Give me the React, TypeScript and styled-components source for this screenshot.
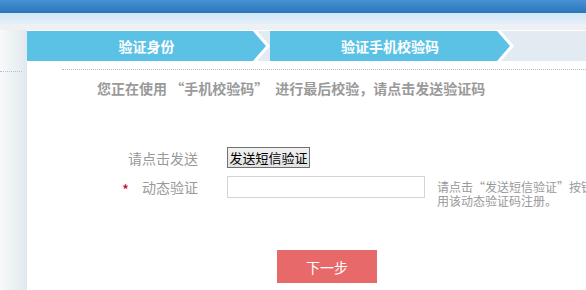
import styled, { createGlobalStyle } from "styled-components";

const GlobalStyle = createGlobalStyle`
	html, body {
		margin: 0;
		padding: 0;
	}
	body {
		width: 586px;
		height: 290px;
		overflow: hidden;
		background: #fff;
		font-family: "Noto Sans CJK SC", "Noto Sans", sans-serif;
	}
`;

const Page = styled.div`
	display: flex;
	flex-direction: column;
	width: 586px;
	height: 290px;
	overflow: hidden;
`;

const TopBar = styled.div`
	height: 13px;
	background: linear-gradient(#4792d4, #2b75ba);
`;

const SubBar = styled.div`
	height: 11px;
	background: linear-gradient(#d2e6f7, #e4f0fa);
`;

const Strip = styled.div`
	height: 6px;
	background: #eef0f2;
`;

const Body = styled.div`
	display: flex;
	flex: 1;
`;

const Side = styled.div`
	width: 27px;
	flex-shrink: 0;
	background: linear-gradient(to right, #f7f9fa, #e2e9ee);
	padding-top: 41px;
	box-sizing: border-box;
`;

const SideRule = styled.div`
	width: 22px;
	border-top: 1px dotted #b8bec4;
`;

const Main = styled.div`
	flex: 1;
	padding-top: 1px;
	min-width: 0;
`;

const Tabs = styled.div`
	display: flex;
	height: 30px;
	background: #e2ebf2;
`;

const arrow = `polygon(0 0, calc(100% - 13px) 0, 100% 50%, calc(100% - 13px) 100%, 0 100%)`;

const Tab = styled.div<{ width: number }>`
	width: ${(props) => props.width}px;
	height: 100%;
	background: #fff;
	clip-path: ${arrow};
`;

const TabInner = styled.div`
	height: 100%;
	margin-right: 4px;
	background: #5bc2e6;
	clip-path: ${arrow};
	display: flex;
	align-items: center;
	justify-content: center;
	color: #fff;
	font-size: 14px;
	font-weight: bold;
`;

const Divider = styled.div`
	margin: 8px 0 0 35px;
	border-top: 1px dotted #bbb;
`;

const Intro = styled.p`
	margin: 8px 0 0 70px;
	line-height: 20px;
	font-size: 14px;
	font-weight: bold;
	color: #9a9a9a;
	white-space: pre;
`;

const Form = styled.div`
	display: grid;
	grid-template-columns: 171px auto;
	column-gap: 29px;
	row-gap: 7px;
	margin-top: 49px;
`;

const Label = styled.div`
	display: flex;
	align-items: center;
	justify-content: flex-end;
	height: 22px;
	font-size: 14px;
	color: #999;
`;

const Star = styled.span`
	color: #c8001e;
	font-size: 15px;
	margin-right: 13px;
	padding-top: 4px;
`;

const SmsButton = styled.button`
	justify-self: start;
	box-sizing: border-box;
	width: 83px;
	height: 21px;
	padding: 0;
	border: 1px solid #707070;
	background: linear-gradient(#f2f2f2, #e2e2e2);
	color: #000;
	font-family: "Noto Sans CJK SC", sans-serif;
	font-size: 13px;
	line-height: 19px;
`;

const Field = styled.div`
	display: flex;
	align-items: flex-start;
	gap: 12px;
	min-width: 0;
	overflow: hidden;
`;

const Input = styled.input`
	box-sizing: border-box;
	width: 198px;
	height: 22px;
	flex-shrink: 0;
	border: 1px solid #d4d4d4;
	outline: none;
`;

const Hint = styled.div`
	margin-top: 4px;
	display: flex;
	flex-direction: column;
`;

const HintLine = styled.span`
	height: 14px;
	font-size: 12px;
	line-height: 14px;
	color: #999;
	white-space: nowrap;
`;

const Actions = styled.div`
	padding-left: 250px;
	margin-top: 42px;
`;

const NextButton = styled.button`
	width: 100px;
	height: 33px;
	border: none;
	background: #e8696a;
	color: #fff;
	font-family: "Noto Sans CJK SC", sans-serif;
	font-size: 14px;
`;

export default function App() {
	return (
		<Page>
			<GlobalStyle />
			<TopBar />
			<SubBar />
			<Strip />
			<Body>
				<Side>
					<SideRule />
				</Side>
				<Main>
					<Tabs>
						<Tab width={243}>
							<TabInner>验证身份</TabInner>
						</Tab>
						<Tab width={244}>
							<TabInner>验证手机校验码</TabInner>
						</Tab>
					</Tabs>
					<Divider />
					<Intro>您正在使用 “手机校验码”　进行最后校验，请点击发送验证码</Intro>
					<Form>
						<Label>请点击发送</Label>
						<SmsButton>发送短信验证</SmsButton>
						<Label>
							<Star>*</Star>动态验证
						</Label>
						<Field>
							<Input type="text" />
							<Hint>
								<HintLine>请点击“发送短信验证”按钮获取验证码，</HintLine>
								<HintLine>用该动态验证码注册。</HintLine>
							</Hint>
						</Field>
					</Form>
					<Actions>
						<NextButton>下一步</NextButton>
					</Actions>
				</Main>
			</Body>
		</Page>
	);
}
